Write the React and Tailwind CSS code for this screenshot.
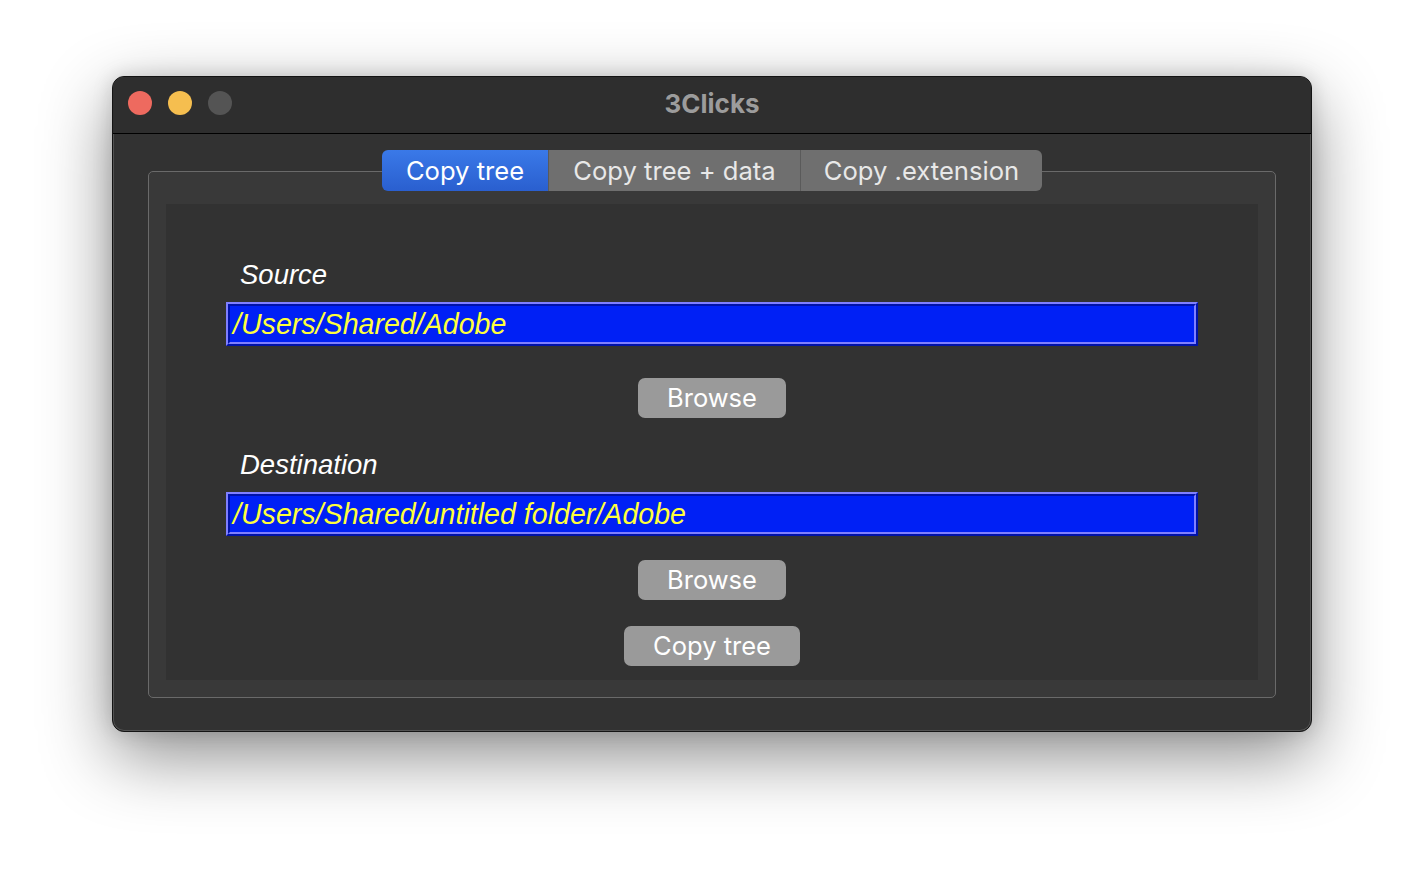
const sysFont = { fontFamily: 'Inter, "Noto Sans", sans-serif' }

function Field({ value }) {
  return (
    <div className="h-[44px] border-2 border-t-[#7f7fff] border-l-[#7f7fff] border-b-[#0012a8] border-r-[#0012a8]">
      <div className="h-full border-2 border-t-[#0012a8] border-l-[#0012a8] border-b-[#7f7fff] border-r-[#7f7fff] bg-[#0020f5] flex items-center pl-[3px]">
        <span
          className="italic text-[28.6px] leading-none text-[#ffff3c]"
          style={{ fontFamily: '"Liberation Sans", Arial, sans-serif' }}
        >
          {value}
        </span>
      </div>
    </div>
  )
}

function Button({ children, width }) {
  return (
    <div className="flex justify-center">
      <button
        className={`${width} h-[40px] rounded-[7px] bg-[#9a9a9a] text-white text-[25.5px] leading-none`}
        style={sysFont}
      >
        {children}
      </button>
    </div>
  )
}

function Label({ children }) {
  return (
    <div
      className="h-[30px] pl-[14px] flex items-center italic text-[27.5px] leading-none text-white"
      style={{ fontFamily: '"Liberation Sans", Arial, sans-serif' }}
    >
      {children}
    </div>
  )
}

export default function App() {
  const tabs = [
    { label: 'Copy tree', w: 'w-[166px]', active: true },
    { label: 'Copy tree + data', w: 'w-[252px]' },
    { label: 'Copy .extension', w: 'w-[242px]' },
  ]

  return (
    <div className="w-[1424px] h-[880px] bg-white pt-[76px] pl-[112px] overflow-hidden">
      <div className="w-[1200px] h-[656px] rounded-[12px] bg-[#323232] border border-[#141414] shadow-[0_24px_70px_rgba(0,0,0,0.45),0_0_20px_rgba(0,0,0,0.15),inset_0_0_0_1px_rgba(255,255,255,0.16)] overflow-hidden flex flex-col">
        {/* title bar */}
        <div className="h-[57px] shrink-0 bg-[#2e2e2e] border-b border-black relative flex items-center justify-center">
          <div className="absolute left-[15px] top-[14px] flex gap-[16px]">
            <span className="w-[24px] h-[24px] rounded-full bg-[#ee6a5f]" />
            <span className="w-[24px] h-[24px] rounded-full bg-[#f5be4f]" />
            <span className="w-[24px] h-[24px] rounded-full bg-[#545454]" />
          </div>
          <span className="text-[26px] leading-none font-bold text-[#9c9c9c] -mt-[2px]" style={sysFont}>
            3Clicks
          </span>
        </div>

        {/* content */}
        <div className="px-[35px] pt-[16px]">
          <div className="relative z-10 flex justify-center">
            <div className="flex h-[41px] rounded-[6px] overflow-hidden">
              {tabs.map((t, i) => (
                <div
                  key={t.label}
                  className={`${t.w} flex items-center justify-center text-[25.6px] leading-none ${
                    t.active
                      ? 'bg-gradient-to-b from-[#3a79e8] to-[#2a5fcf] text-white'
                      : 'bg-[#6f6f6f] text-[#e8e8e8]'
                  } ${i > 0 ? 'border-l border-[#5a5a5a]' : ''}`}
                  style={sysFont}
                >
                  {t.label}
                </div>
              ))}
            </div>
          </div>

          {/* group box */}
          <div className="-mt-[20px] h-[527px] rounded-[5px] border border-[#6a6a6a] bg-[#393939] px-[17px] pt-[32px]">
            <div className="h-[476px] bg-[#323232] px-[60px] pt-[56px]">
              <Label>Source</Label>
              <div className="mt-[12px]">
                <Field value="/Users/Shared/Adobe" />
              </div>
              <div className="mt-[32px]">
                <Button width="w-[148px]">Browse</Button>
              </div>
              <div className="mt-[32px]">
                <Label>Destination</Label>
              </div>
              <div className="mt-[12px]">
                <Field value="/Users/Shared/untitled folder/Adobe" />
              </div>
              <div className="mt-[24px]">
                <Button width="w-[148px]">Browse</Button>
              </div>
              <div className="mt-[26px]">
                <Button width="w-[176px]">Copy tree</Button>
              </div>
            </div>
          </div>
        </div>
      </div>
    </div>
  )
}
